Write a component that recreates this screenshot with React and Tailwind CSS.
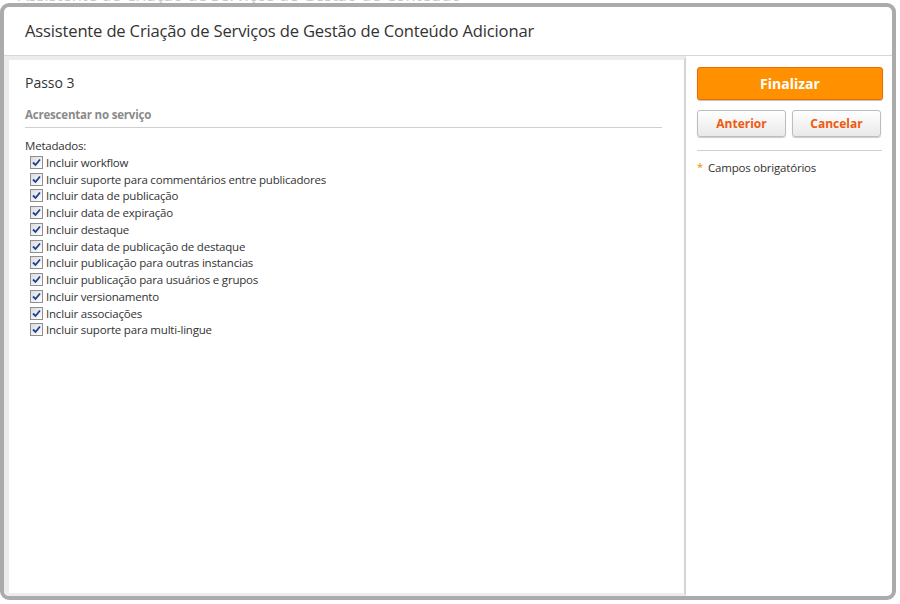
const items = [
  "Incluir workflow",
  "Incluir suporte para commentários entre publicadores",
  "Incluir data de publicação",
  "Incluir data de expiração",
  "Incluir destaque",
  "Incluir data de publicação de destaque",
  "Incluir publicação para outras instancias",
  "Incluir publicação para usuários e grupos",
  "Incluir versionamento",
  "Incluir associações",
  "Incluir suporte para multi-lingue",
];

const CheckBox = () => (
  <span className="w-[13px] h-[13px] border border-[#8e8f8f] bg-gradient-to-br from-[#dcdcdc] to-white flex items-center justify-center shrink-0">
    <svg width="9" height="9" viewBox="0 0 9 9">
      <path d="M1 4.5 L3.5 7 L8 1.5" fill="none" stroke="#1d3f91" strokeWidth="1.8" />
    </svg>
  </span>
);

export default function App() {
  return (
    <div className="w-[900px] h-[604px] bg-white overflow-hidden relative font-['Open_Sans',sans-serif] text-[#333]">
      {/* ghost title behind the dialog */}
      <div className="h-[3px] overflow-hidden">
        <div className="-mt-[17px] pl-[18px] text-[16.6px] text-[#c8c8c8] whitespace-nowrap">
          Assistente de Criação de Serviços de Gestão de Conteúdo
        </div>
      </div>

      <div className="w-[896px] h-[597px] border-4 border-[#ababab] rounded-[9px] flex flex-col bg-white overflow-hidden">
        {/* Header */}
        <div className="h-[49px] shrink-0 border-b border-[#d8d8d8] flex items-center pl-[21px]">
          <h1 className="text-[16.6px] text-[#333] tracking-[-0.18px]">
            Assistente de Criação de Serviços de Gestão de Conteúdo Adicionar
          </h1>
        </div>

        {/* Body */}
        <div className="flex flex-1 min-h-0">
          <div className="w-[682px] border-l-[5px] border-t-[4px] border-b-[3px] border-[#ececec] border-r-2 border-r-[#d4d4d4] pl-[16px] pr-[22px] pt-[13px]">
            <div className="text-[14px] text-[#333] leading-[20px]">Passo 3</div>
            <div className="mt-[13px] pb-[4px] border-b border-[#cfcfcf] text-[11.5px] font-bold text-[#8a8a8a] leading-[17px] tracking-[-0.2px]">
              Acrescentar no serviço
            </div>
            <div className="mt-[9px] text-[11.5px] leading-[17px] text-[#333] tracking-[-0.2px]">Metadados:</div>
            <div className="flex flex-col">
              {items.map((t) => (
                <label key={t} className="flex items-center gap-[3px] h-[16.75px] pl-[5px] text-[11.5px] tracking-[-0.2px] text-[#333]">
                  <CheckBox />
                  <span className="whitespace-nowrap">{t}</span>
                </label>
              ))}
            </div>
          </div>

          <div className="flex-1 pl-[11px] pr-[5px] pt-[11px]">
            <button className="w-[186px] h-[33px] rounded-[3px] bg-[#ff9000] border border-[#f06a00] text-white font-bold text-[14px] shadow-[0_1px_1px_rgba(0,0,0,0.25)]">
              Finalizar
            </button>
            <div className="flex gap-[6px] mt-[10px]">
              {["Anterior", "Cancelar"].map((b) => (
                <button
                  key={b}
                  className="w-[89px] h-[27px] rounded-[3px] border border-[#bdbdbd] bg-gradient-to-b from-white to-[#e9e9e9] text-[#ef5a0e] font-bold text-[12px] shadow-[0_1px_1px_rgba(0,0,0,0.2)]"
                >
                  {b}
                </button>
              ))}
            </div>
            <div className="mt-[13px] border-t border-[#d0d0d0] w-[185px]" />
            <div className="mt-[8px] flex items-center text-[11.5px] tracking-[-0.2px] text-[#333]">
              <span className="text-[#f08a00] w-[11px] text-[11px]">*</span>
              Campos obrigatórios
            </div>
          </div>
        </div>
      </div>
    </div>
  );
}
